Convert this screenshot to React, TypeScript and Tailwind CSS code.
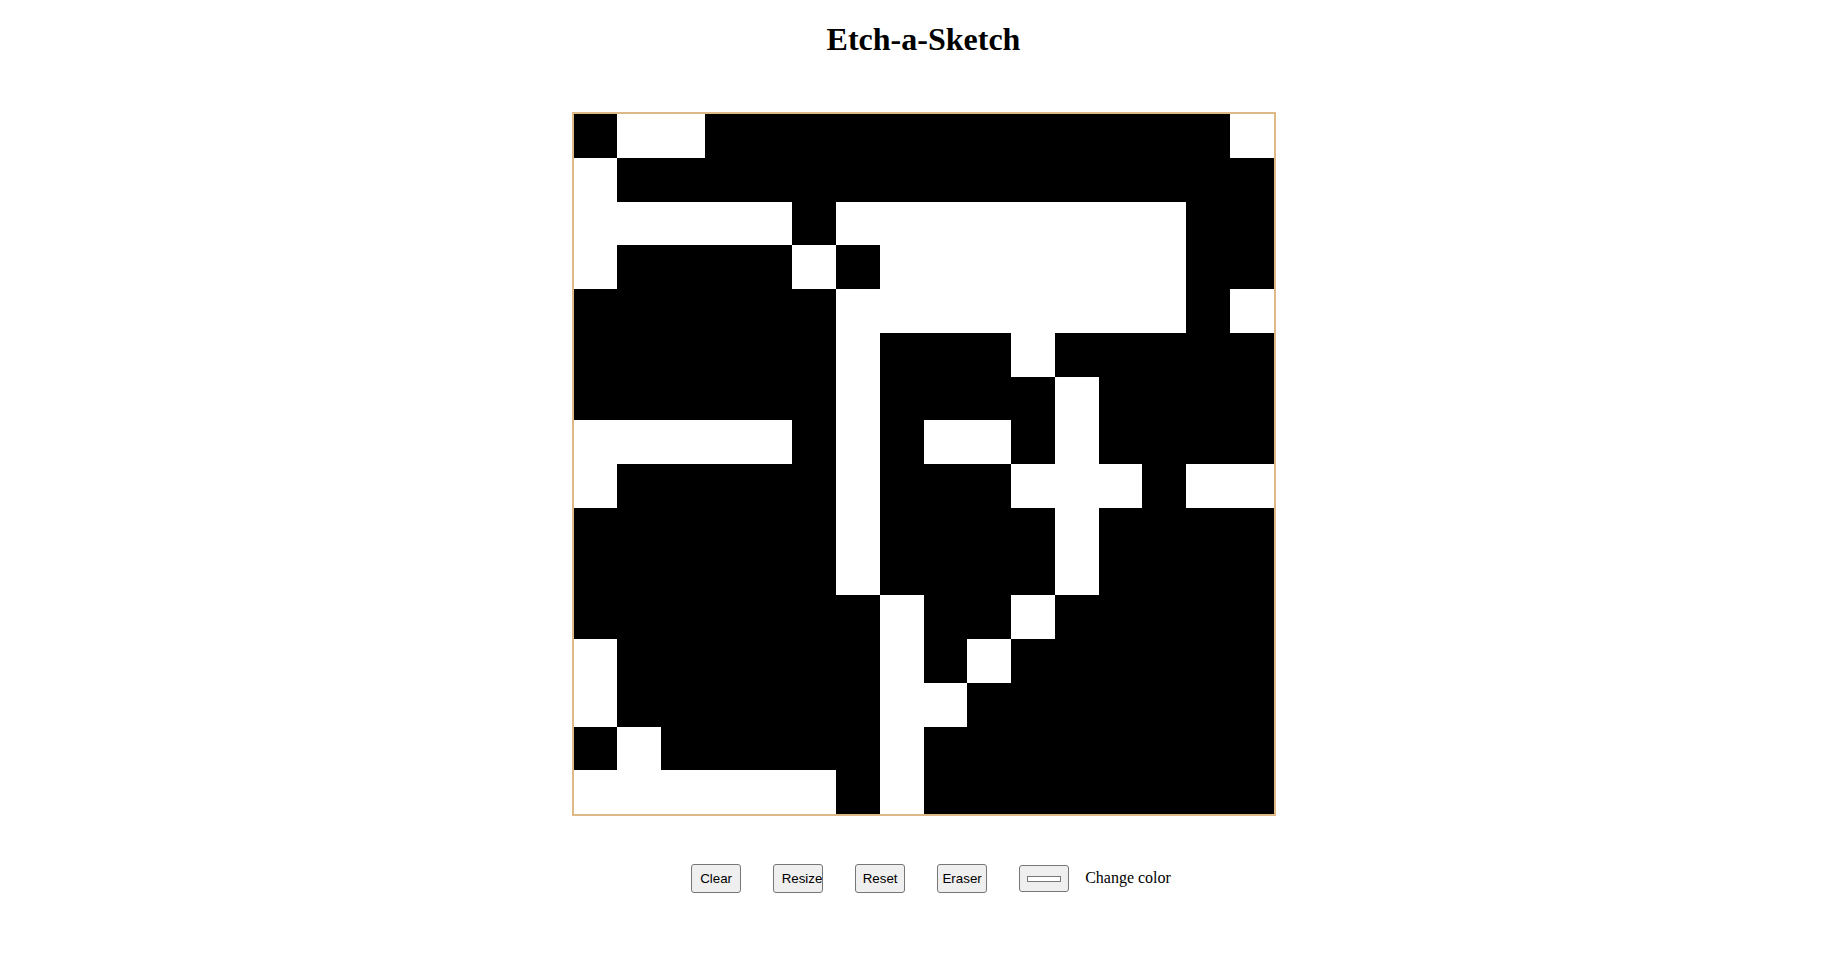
import React from "react";

const ROWS = [
  "BWWBBBBBBBBBBBBW",
  "WBBBBBBBBBBBBBBB",
  "WWWWWBWWWWWWWWBB",
  "WBBBBWBWWWWWWWBB",
  "BBBBBBWWWWWWWWBW",
  "BBBBBBWBBBWBBBBB",
  "BBBBBBWBBBBWBBBB",
  "WWWWWBWBWWBWBBBB",
  "WBBBBBWBBBWWWBWW",
  "BBBBBBWBBBBWBBBB",
  "BBBBBBWBBBBWBBBB",
  "BBBBBBBWBBWBBBBB",
  "WBBBBBBWBWBBBBBB",
  "WBBBBBBWWBBBBBBB",
  "BWBBBBBWBBBBBBBB",
  "WWWWWWBWBBBBBBBB",
];

function Btn({ label, left }: { label: string; left?: boolean }) {
  return (
    <button
      className={
        left
          ? "w-[50px] h-[29px] bg-[#efefef] border border-[#767676] rounded-[3px] text-[13.33px] text-black font-['Liberation_Sans',Arial,sans-serif] pl-[7.5px] pr-0 text-left whitespace-nowrap overflow-hidden"
          : "w-[50px] h-[29px] bg-[#efefef] border border-[#767676] rounded-[3px] text-[13.33px] text-black font-['Liberation_Sans',Arial,sans-serif] px-0 text-center whitespace-nowrap overflow-hidden"
      }
    >
      {label}
    </button>
  );
}

export default function App() {
  return (
    <div className="min-h-screen bg-white flex flex-col items-center font-['Liberation_Serif','Times_New_Roman',serif] text-black">
      <h1 className="mt-[21px] text-[32px] leading-[37px] font-bold">Etch-a-Sketch</h1>
      <div className="mt-[54px] w-[704px] h-[704px] border-2 border-[#deb887] grid grid-cols-16 grid-rows-16">
        {ROWS.flatMap((row, r) =>
          row.split("").map((c, i) => (
            <div key={`${r}-${i}`} className={c === "B" ? "bg-black" : "bg-white"} />
          ))
        )}
      </div>
      <div className="mt-[48px] pl-[15px] flex items-center">
        <Btn label="Clear" />
        <div className="w-[32px]" />
        <Btn label="Resize" left />
        <div className="w-[32px]" />
        <Btn label="Reset" />
        <div className="w-[32px]" />
        <Btn label="Eraser" />
        <div className="w-[32px]" />
        <div className="w-[50px] h-[27px] bg-[#efefef] border border-[#767676] rounded-[3px] flex items-center justify-center">
          <div className="w-[34px] h-[6px] bg-white border border-[#777777]" />
        </div>
        <span className="ml-[16px] mb-[2px] text-[16px] leading-[18px]">Change color</span>
      </div>
    </div>
  );
}
